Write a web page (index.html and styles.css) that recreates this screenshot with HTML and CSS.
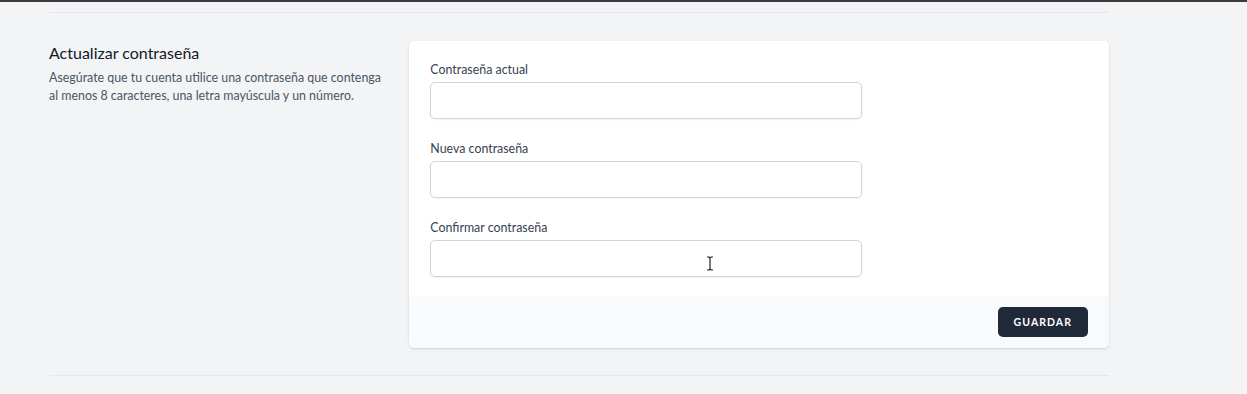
FILE: index.html
```html
<!DOCTYPE html>
<html lang="es">
<head>
  <meta charset="UTF-8">
  <title>Actualizar contraseña</title>
  <meta name="viewport" content="width=device-width, initial-scale=1.0">
  <link rel="stylesheet" href="styles.css">
</head>
<body>

  <div class="topbar"></div>

  <div class="container">
    <div class="section-border"><div class="line"></div></div>

    <div class="form-section">
      <div class="section-title">
        <h3>Actualizar contraseña</h3>
        <p>Asegúrate que tu cuenta utilice una contraseña que contenga al menos 8 caracteres, una letra mayúscula y un número.</p>
      </div>

      <form class="card" onsubmit="return false;">
        <div class="card-body">
          <div class="field">
            <label for="current_password">Contraseña actual</label>
            <input type="password" id="current_password">
          </div>
          <div class="field">
            <label for="password">Nueva contraseña</label>
            <input type="password" id="password">
          </div>
          <div class="field">
            <label for="password_confirmation">Confirmar contraseña</label>
            <input type="password" id="password_confirmation">
            <svg class="cursor" width="8" height="15" viewBox="0 0 8 15">
              <path d="M1 1h2l1 1 1-1h2M4 2v11M1 14h2l1-1 1 1h2" fill="none" stroke="#222" stroke-width="1.2"/>
            </svg>
          </div>
        </div>
        <div class="card-footer">
          <button type="submit">Guardar</button>
        </div>
      </form>
    </div>

    <div class="section-border"><div class="line"></div></div>
  </div>

</body>
</html>
```

FILE: styles.css
```css
body {
  margin: 0;
  background-color: #f3f4f6;
  font-family: Lato, "Noto Sans", sans-serif;
  color: #111827;
}

.topbar {
  height: 2px;
  background-color: #3b3b3b;
}

.container {
  width: 1060px;
  margin-left: 49px;
}

.section-border {
  padding: 10px 0 28px;
}

.section-border:last-child {
  padding: 27px 0 0;
}

.line {
  border-top: 1px solid #e5e7eb;
}

.form-section {
  display: grid;
  grid-template-columns: repeat(3, 1fr);
  column-gap: 21px;
}

.section-title h3 {
  margin: 0;
  font-size: 16px;
  line-height: 24.5px;
  font-weight: 400;
  color: #111827;
}

.section-title p {
  margin: 3.5px 0 0;
  font-size: 12.4px;
  line-height: 17.5px;
  color: #4b5563;
}

.card {
  grid-column: span 2;
  background: #fff;
  border-radius: 5px;
  box-shadow: 0 1px 3px rgba(0,0,0,0.1), 0 1px 2px rgba(0,0,0,0.06);
}

.card-body {
  padding: 20px 21px 19px;
  display: grid;
  grid-template-columns: repeat(6, 1fr);
  row-gap: 21px;
  column-gap: 21px;
}

.field {
  grid-column: span 4;
  position: relative;
}

label {
  display: block;
  font-size: 12.4px;
  line-height: 17.5px;
  color: #374151;
}

input[type="password"] {
  display: block;
  width: 100%;
  height: 37px;
  margin-top: 3.5px;
  border: 1px solid #d1d5db;
  border-radius: 5px;
  box-shadow: 0 1px 2px rgba(0,0,0,0.05);
  box-sizing: border-box;
  background: #fff;
}

.cursor {
  position: absolute;
  left: 276px;
  top: 37px;
}

.card-footer {
  display: flex;
  justify-content: flex-end;
  align-items: center;
  padding: 11px 21px 11px;
  background-color: #f9fafb;
  border-radius: 0 0 5px 5px;
}

button {
  height: 30px;
  padding: 0 15px;
  background-color: #1f2937;
  color: #fff;
  border: 1px solid transparent;
  border-radius: 5px;
  font-family: inherit;
  font-size: 10.5px;
  font-weight: 700;
  letter-spacing: 0.1em;
  text-transform: uppercase;
  cursor: pointer;
}
```
